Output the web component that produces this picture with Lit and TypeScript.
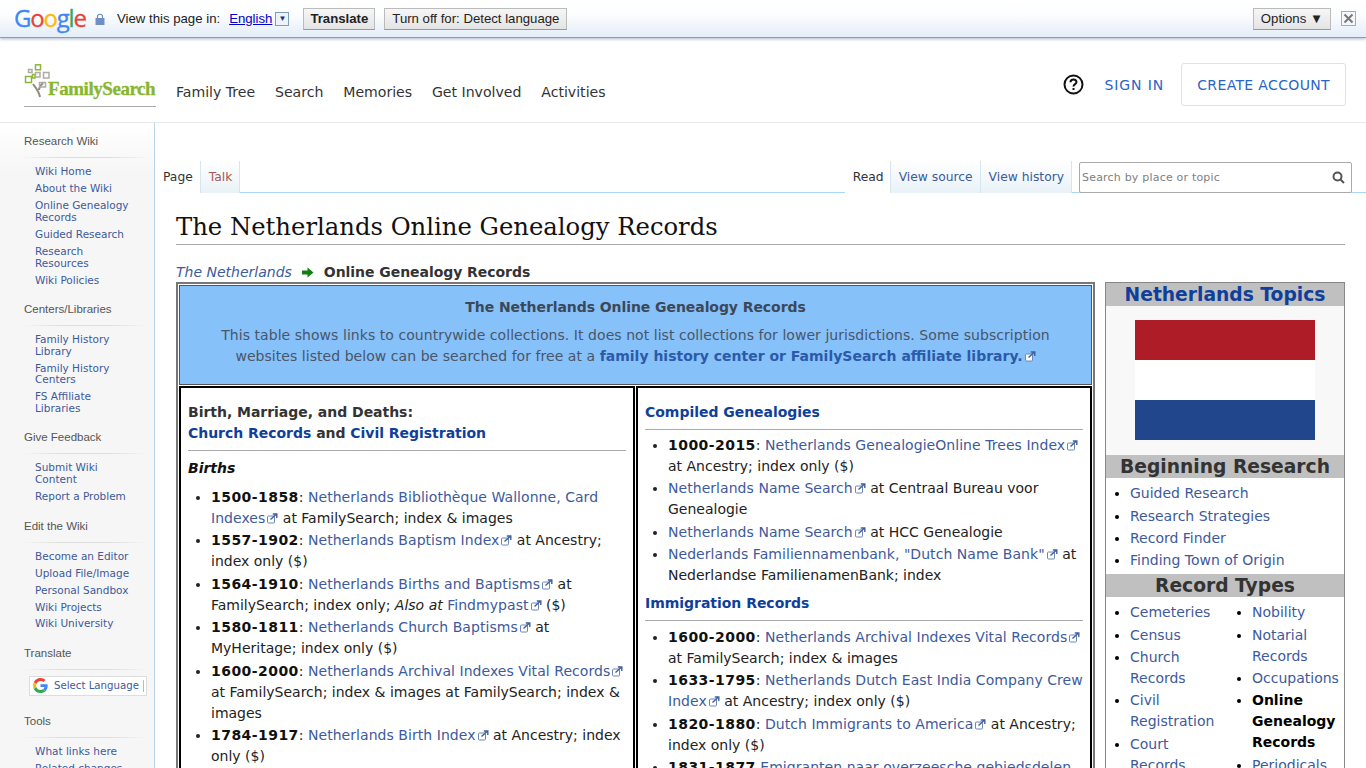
import { LitElement, html, css, svg } from "lit";
import { customElement } from "lit/decorators.js";

const extIcon = html`<svg class="ext" width="11" height="11" viewBox="0 0 11 11">
  <rect x="0.5" y="3" width="7" height="7" rx="1" fill="#fff" stroke="#6d86b8" />
  <path d="M3.5 6.5 L9 1.5 M5.8 1 H9.8 V5" fill="none" stroke="#3f5f9f" stroke-width="1.4" />
</svg>`;

const ext = (t: string) => html`<a href="#">${t}</a>${extIcon}`;

const sidebar = [
  { head: "Research Wiki", links: ["Wiki Home", "About the Wiki", "Online Genealogy Records", "Guided Research", "Research Resources", "Wiki Policies"] },
  { head: "Centers/Libraries", links: ["Family History Library", "Family History Centers", "FS Affiliate Libraries"] },
  { head: "Give Feedback", links: ["Submit Wiki Content", "Report a Problem"] },
  { head: "Edit the Wiki", links: ["Become an Editor", "Upload File/Image", "Personal Sandbox", "Wiki Projects", "Wiki University"] },
];

const typesLeft = ["Cemeteries", "Census", "Church Records", "Civil Registration", "Court Records"];

@customElement("app-root")
export class AppRoot extends LitElement {
  static styles = css`
    :host {
      display: block;
      height: 768px;
      overflow: hidden;
      background: #fff;
      font-family: "DejaVu Sans", Verdana, sans-serif;
      color: #333;
    }
    a {
      color: #3d5a9c;
      text-decoration: none;
    }

    /* google translate bar */
    .gbar {
      height: 38px;
      box-sizing: border-box;
      display: flex;
      align-items: center;
      padding: 0 10px 0 14px;
      background: linear-gradient(#fff, #fcfdfe 40%, #e3edf9);
      border-bottom: 1px solid #7d9fd6;
      box-shadow: 0 1px 3px rgba(90, 110, 150, 0.5);
      font: 13.2px "Liberation Sans", Arial, sans-serif;
      color: #222;
      position: relative;
    }
    .glogo {
      font: 24px "Open Sans", "Liberation Sans", sans-serif;
      letter-spacing: -1.2px;
      -webkit-text-stroke: 0.3px;
      width: 81px;
      margin-top: -2px;
    }
    .lock {
      margin-right: 12px;
    }
    .gbar .lang {
      color: #0000cc;
      text-decoration: underline;
      margin-left: 9px;
    }
    .drop {
      width: 12px;
      height: 12px;
      margin: 0 14px 0 3px;
      border: 1px solid #7f9db9;
      font-size: 8px;
      line-height: 12px;
      text-align: center;
      color: #123a7a;
      background: #eef3fb;
    }
    .gbtn {
      height: 22px;
      box-sizing: border-box;
      padding: 0 7px;
      margin-right: 9px;
      display: flex;
      align-items: center;
      border: 1px solid #bbb;
      border-bottom-color: #999;
      background: linear-gradient(#f6f6f6, #e4e4e4);
    }
    .gbtn.b {
      font-weight: bold;
      padding: 0 6px;
    }
    .grow {
      flex: 1;
    }
    .close {
      width: 13px;
      height: 13px;
      border: 1px solid #aaa;
      margin: 0 0 0 10px;
      display: block;
      background: #f4f7fb;
    }

    /* site header */
    .top {
      height: 84px;
      box-sizing: border-box;
      margin-top: 1px;
      padding: 24px 20px 0 24px;
      display: flex;
      border-bottom: 1px solid #e8e8e8;
    }
    .logo {
      width: 132px;
      height: 43px;
      border-bottom: 1px solid #aaa;
      position: relative;
      flex: none;
    }
    .logo svg {
      position: absolute;
      left: 0;
      top: 1px;
    }
    .logo span {
      position: absolute;
      left: 24px;
      top: 15px;
      font: bold 19px "Liberation Serif", serif;
      letter-spacing: -0.45px;
      -webkit-text-stroke: 0.3px;
      color: #88b62e;
    }
    .nav {
      display: flex;
      gap: 19.8px;
      margin: 21px 0 0 20px;
      font-size: 14.1px;
      line-height: 17px;
      color: #333;
    }
    .account {
      margin-left: auto;
      display: flex;
      align-items: center;
      height: 43px;
      font-size: 14px;
      color: #2a65c4;
      letter-spacing: 0.35px;
    }
    .account svg {
      margin-right: 21px;
    }
    .signin {
      letter-spacing: 0.9px;
    }
    .create {
      margin-left: 17px;
      height: 43px;
      box-sizing: border-box;
      padding: 0 15px;
      display: flex;
      align-items: center;
      border: 1px solid #e2e2e2;
      border-radius: 3px;
    }

    /* body layout */
    .main {
      display: flex;
    }
    .side {
      width: 155px;
      box-sizing: border-box;
      flex: none;
      height: 646px;
      padding: 11px 0 0 24px;
      border-right: 1px solid #b9d4e8;
      background: linear-gradient(#fff, #f6f6f6 50px);
    }
    .side h5 {
      margin: 0;
      font: 11.5px/14px "Liberation Sans", Arial, sans-serif;
      color: #555;
    }
    .side ul {
      list-style: none;
      margin: 9px 8px 0 0;
      padding: 8px 11px 0 11px;
      border-top: 1px solid;
      border-image: linear-gradient(90deg, #f6f6f6, #ddd 30%, #ddd 70%, #f6f6f6) 1;
    }
    .side section {
      margin-bottom: 15.5px;
    }
    .side section.tr {
      margin-bottom: 18px;
    }
    .side li {
      font-size: 10.5px;
      line-height: 11.8px;
      margin-bottom: 5.2px;
    }
    .gt {
      margin: 6px 7px 0 5px;
      height: 20px;
      width: 118px;
      box-sizing: border-box;
      border: 1px solid #ddd;
      background: #fff;
      display: flex;
      align-items: center;
      gap: 6px;
      padding-left: 3px;
      font-size: 10.2px;
      color: #3d5a9c;
      white-space: nowrap;
    }
    .gt i {
      width: 1px;
      height: 12px;
      background: #bbb;
      margin-left: -2px;
    }

    .page {
      flex: 1;
      min-width: 0;
      padding-top: 38px;
    }
    .tabs {
      height: 32px;
      box-sizing: border-box;
      display: flex;
      font-size: 12.3px;
      border-bottom: 1px solid #a7d7f9;
      padding-right: 14px;
    }
    .tab {
      box-sizing: border-box;
      height: 32px;
      padding: 9px 7px 0 8px;
      line-height: 14px;
      color: #3d5a9c;
      background: linear-gradient(#fff, #e8f2f8);
      border-right: 1px solid #d5e6f2;
    }
    .tab.on {
      background: #fff;
      color: #333;
    }
    .tab.read {
      padding-right: 6px;
    }
    .tab.red {
      color: #a55858;
    }
    .search {
      box-sizing: border-box;
      width: 273px;
      height: 31px;
      margin: 1px 0 0 7px;
      border: 1px solid #aaa;
      border-radius: 2px;
      padding: 0 6px 1px 2px;
      display: flex;
      align-items: center;
      justify-content: space-between;
      font-size: 11px;
      letter-spacing: 0.2px;
      color: #808080;
      background: #fff;
    }
    .content {
      padding: 0 21px;
    }
    h1 {
      margin: 0;
      padding-top: 17px;
      height: 52px;
      box-sizing: border-box;
      font: 24.3px/34px "DejaVu Serif", "Liberation Serif", serif;
      color: #111;
      border-bottom: 1px solid #aaa;
    }
    .crumb {
      height: 37px;
      box-sizing: border-box;
      padding-top: 17px;
      font-size: 14px;
      line-height: 20px;
      display: flex;
      align-items: center;
    }
    .crumb em {
      color: #3d5a9c;
    }
    .crumb svg {
      margin: 0 10px 0 9px;
    }
    .crumb b {
      letter-spacing: -0.05px;
    }
    .grid {
      display: flex;
      gap: 10px;
      align-items: flex-start;
      font-size: 14px;
      line-height: 21px;
    }
    .tbl {
      width: 919px;
      flex: none;
      box-sizing: border-box;
      border: 2px solid #777;
      padding: 1px;
    }
    .banner {
      box-sizing: border-box;
      height: 100px;
      padding: 11px 40px 0;
      background: #86c1fa;
      border: 1px solid #555;
      text-align: center;
      letter-spacing: 0.05px;
      color: #4a5568;
    }
    .banner h3 {
      margin: 0 0 7px;
      font-size: 14px;
      line-height: 21px;
      letter-spacing: -0.07px;
      color: #3c4858;
    }
    .banner a {
      color: #2c5aa8;
      font-weight: bold;
      letter-spacing: 0;
    }
    .cols {
      display: flex;
      gap: 1px;
      margin-top: 1px;
    }
    .cell {
      flex: 1 1 0;
      min-width: 0;
      box-sizing: border-box;
      border: 2px solid #000;
      padding: 14px 7px 0;
      height: 460px;
    }
    .cell h4 {
      margin: 0;
      font-size: 14px;
      line-height: 21px;
      letter-spacing: -0.03px;
      color: #333;
    }
    .cell h4 a,
    .bar a {
      color: #0f3f9a;
    }
    .rule {
      border-bottom: 1px solid #aaa;
      padding-bottom: 6px;
    }
    .sub {
      font-weight: bold;
      font-style: italic;
      color: #111;
      margin: 7px 0 8px;
    }
    .cell ul {
      margin: 5px 0 0;
      padding-left: 23px;
      color: #222;
    }
    .cell .sub + ul {
      margin-top: 8px;
    }
    .cell .next + ul {
      margin-top: 5.7px;
    }
    .cell li {
      margin-bottom: 1.4px;
    }
    .cell li a {
      letter-spacing: 0.05px;
    }
    .cell li b {
      color: #111;
      letter-spacing: 0.45px;
    }
    .next {
      margin-top: 7px !important;
    }
    .ext {
      margin-left: 2px;
      vertical-align: -1px;
    }

    .info {
      width: 240px;
      flex: none;
      box-sizing: border-box;
      border: 1px solid #888;
    }
    .bar {
      background: #c0c0c0;
      text-align: center;
      font-size: 18.7px;
      font-weight: bold;
      line-height: 23px;
      color: #333;
    }
    .flagbox {
      background: #f8f8f8;
      padding: 14px 0;
      height: 149px;
      box-sizing: border-box;
    }
    .flag {
      width: 180px;
      height: 120px;
      margin: 0 auto;
      background: linear-gradient(#ae1c28 33.33%, #fff 33.33%, #fff 66.66%, #21468b 66.66%);
    }
    .info ul {
      margin: 0;
      padding: 5.3px 0 1.3px 24px;
      color: #000;
    }
    .info li {
      margin-bottom: 1.4px;
    }
    .types {
      display: grid;
      grid-template-columns: 122px 1fr;
    }
    .info .types ul {
      padding-top: 5px;
    }
    .types b {
      color: #000;
    }
  `;

  render() {
    return html`
      ${this.renderGbar()}
      <div class="top">
        <div class="logo">
          <svg width="30" height="36" viewBox="0 0 30 36" fill="none" stroke-width="1.5">
            <path d="M16 33 C15 27 12 24 9 20 M15 26 C15 23 17 21 19 19" stroke="#8f8b80" stroke-width="2" />
            <rect x="1.5" y="12.5" width="6" height="6" stroke="#8db53c" />
            <rect x="11.5" y="0.8" width="5" height="5" stroke="#8db53c" />
            <rect x="8.5" y="10.5" width="2.5" height="3.5" stroke="#8db53c" />
            <rect x="4.5" y="5.5" width="3.5" height="3" stroke="#b0aca2" />
            <rect x="11.5" y="8.5" width="4.5" height="4.5" stroke="#b0aca2" />
            <rect x="19.5" y="8.5" width="5.5" height="5.5" stroke="#b0aca2" />
            <rect x="15.5" y="18.5" width="6" height="4.5" stroke="#b0aca2" />
          </svg>
          <span>FamilySearch</span>
        </div>
        <div class="nav">
          <span>Family Tree</span><span>Search</span><span>Memories</span><span>Get Involved</span><span>Activities</span>
        </div>
        <div class="account">
          <svg width="21" height="21" viewBox="0 0 21 21">
            <circle cx="10.5" cy="10.5" r="9" fill="none" stroke="#111" stroke-width="2" />
            <path d="M7.5 8.2 C7.5 4.6 13.500 4.6 13.500 8 C13.500 10.2 10.500 10 10.500 12.600" fill="none" stroke="#111" stroke-width="2" />
            <rect x="9.5" y="14" width="2" height="2" fill="#111" />
          </svg>
          <span class="signin">SIGN IN</span>
          <span class="create">CREATE ACCOUNT</span>
        </div>
      </div>
      <div class="main">
        ${this.renderSide()}
        <div class="page">
          <div class="tabs">
            <span class="tab on">Page</span>
            <span class="tab red">Talk</span>
            <span class="grow"></span>
            <span class="tab on read">Read</span>
            <span class="tab">View source</span>
            <span class="tab">View history</span>
            <div class="search">
              <span>Search by place or topic</span>
              <svg width="13" height="13" viewBox="0 0 13 13" fill="none" stroke="#555" stroke-width="2">
                <circle cx="5.5" cy="5.5" r="4" />
                <path d="M8.5 8.5 L12 12" />
              </svg>
            </div>
          </div>
          <div class="content">
            <h1>The Netherlands Online Genealogy Records</h1>
            <div class="crumb">
              <em>The Netherlands</em>
              <svg width="13" height="11" viewBox="0 0 13 11"><path d="M1 3.5 H6.5 V0.5 L12.5 5.5 L6.5 10.5 V7.5 H1 Z" fill="#118011" /></svg>
              <b>Online Genealogy Records</b>
            </div>
            <div class="grid">
              ${this.renderTable()} ${this.renderInfo()}
            </div>
          </div>
        </div>
      </div>
    `;
  }

  renderGbar() {
    return html`<div class="gbar">
      <span class="glogo"
        ><span style="color:#4285f4">G</span><span style="color:#ea4335">o</span><span style="color:#fbbc05">o</span
        ><span style="color:#4285f4">g</span><span style="color:#34a853">l</span><span style="color:#ea4335">e</span></span
      >
      <svg class="lock" width="10" height="12" viewBox="0 0 10 12">
        <path d="M2.5 5 V3.5 C2.5 0.5 7.5 0.5 7.5 3.5 V5" fill="none" stroke="#6f8fc4" stroke-width="1.2" />
        <rect x="0.5" y="5" width="9" height="7" fill="#6f8fc4" />
      </svg>
      <span>View this page in:</span>
      <span class="lang">English</span>
      <span class="drop">▼</span>
      <span class="gbtn b">Translate</span>
      <span class="gbtn">Turn off for: Detect language</span>
      <span class="grow"></span>
      <span class="gbtn" style="margin:0">Options ▼</span>
      <svg class="close" viewBox="0 0 13 13"><path d="M2.5 2.5 L10.5 10.5 M10.5 2.5 L2.5 10.5" stroke="#777" stroke-width="2" /></svg>
    </div>`;
  }

  renderSide() {
    return html`<div class="side">
      ${sidebar.map(
        (s) => html`<section>
          <h5>${s.head}</h5>
          <ul>
            ${s.links.map((l) => html`<li><a href="#">${l}</a></li>`)}
          </ul>
        </section>`
      )}
      <section class="tr">
        <h5>Translate</h5>
        <ul style="padding:0">
          <div class="gt">
            <svg width="15" height="15" viewBox="0 0 48 48">
              ${svg`<path fill="#ea4335" d="M24 9.5c3.5 0 6.700 1.200 9.200 3.600l6.900-6.900C35.900 2.400 30.400 0 24 0 14.600 0 6.500 5.400 2.600 13.200l8 6.200C12.500 13.700 17.800 9.500 24 9.500z"/>
              <path fill="#4285f4" d="M47 24.500c0-1.600-.2-3.200-.4-4.700H24v9h12.900c-.6 3-2.200 5.500-4.700 7.200l7.700 6c4.500-4.200 7.100-10.300 7.100-17.500z"/>
              <path fill="#fbbc05" d="M10.600 28.600c-.5-1.400-.8-3-.8-4.600s.3-3.200.8-4.600l-8-6.200C.9 16.500 0 20.100 0 24s.9 7.500 2.600 10.800l8-6.200z"/>
              <path fill="#34a853" d="M24 48c6.500 0 11.900-2.100 15.900-5.800l-7.700-6c-2.200 1.500-4.900 2.300-8.200 2.300-6.200 0-11.500-4.200-13.400-9.900l-8 6.200C6.500 42.600 14.600 48 24 48z"/>`}
            </svg>
            <span>Select Language</span><i></i>
          </div>
        </ul>
      </section>
      <section>
        <h5>Tools</h5>
        <ul>
          <li><a href="#">What links here</a></li>
          <li><a href="#">Related changes</a></li>
        </ul>
      </section>
    </div>`;
  }

  renderTable() {
    return html`<div class="tbl">
      <div class="banner">
        <h3>The Netherlands Online Genealogy Records</h3>
        This table shows links to countrywide collections. It does not list collections for lower jurisdictions. Some subscription
        websites listed below can be searched for free at a <a href="#">family history center or FamilySearch affiliate library.</a>${extIcon}
      </div>
      <div class="cols">
        <div class="cell">
          <h4 class="rule">Birth, Marriage, and Deaths:<br /><a href="#">Church Records</a> and <a href="#">Civil Registration</a></h4>
          <div class="sub">Births</div>
          <ul>
            <li><b>1500-1858</b>: ${ext("Netherlands Bibliothèque Wallonne, Card Indexes")} at FamilySearch; index &amp; images</li>
            <li><b>1557-1902</b>: ${ext("Netherlands Baptism Index")} at Ancestry; index only ($)</li>
            <li><b>1564-1910</b>: ${ext("Netherlands Births and Baptisms")} at FamilySearch; index only; <i>Also at</i> ${ext("Findmypast")} ($)</li>
            <li><b>1580-1811</b>: ${ext("Netherlands Church Baptisms")} at MyHeritage; index only ($)</li>
            <li><b>1600-2000</b>: ${ext("Netherlands Archival Indexes Vital Records")} at FamilySearch; index &amp; images at FamilySearch; index &amp; images</li>
            <li><b>1784-1917</b>: ${ext("Netherlands Birth Index")} at Ancestry; index only ($)</li>
          </ul>
        </div>
        <div class="cell">
          <h4 class="rule"><a href="#">Compiled Genealogies</a></h4>
          <ul>
            <li><b>1000-2015</b>: ${ext("Netherlands GenealogieOnline Trees Index")} at Ancestry; index only ($)</li>
            <li>${ext("Netherlands Name Search")} at Centraal Bureau voor Genealogie</li>
            <li>${ext("Netherlands Name Search")} at HCC Genealogie</li>
            <li>${ext('Nederlands Familiennamenbank, "Dutch Name Bank"')} at Nederlandse FamilienamenBank; index</li>
          </ul>
          <h4 class="rule next"><a href="#">Immigration Records</a></h4>
          <ul>
            <li><b>1600-2000</b>: ${ext("Netherlands Archival Indexes Vital Records")} at FamilySearch; index &amp; images</li>
            <li><b>1633-1795</b>: ${ext("Netherlands Dutch East India Company Crew Index")} at Ancestry; index only ($)</li>
            <li><b>1820-1880</b>: ${ext("Dutch Immigrants to America")} at Ancestry; index only ($)</li>
            <li><b>1831-1877</b> ${ext("Emigranten naar overzeesche gebiedsdelen")}</li>
          </ul>
        </div>
      </div>
    </div>`;
  }

  renderInfo() {
    return html`<div class="info">
      <div class="bar"><a href="#">Netherlands Topics</a></div>
      <div class="flagbox"><div class="flag"></div></div>
      <div class="bar">Beginning Research</div>
      <ul>
        <li><a href="#">Guided Research</a></li>
        <li><a href="#">Research Strategies</a></li>
        <li><a href="#">Record Finder</a></li>
        <li><a href="#">Finding Town of Origin</a></li>
      </ul>
      <div class="bar">Record Types</div>
      <div class="types">
        <ul>
          ${typesLeft.map((t) => html`<li><a href="#">${t}</a></li>`)}
        </ul>
        <ul>
          <li><a href="#">Nobility</a></li>
          <li><a href="#">Notarial Records</a></li>
          <li><a href="#">Occupations</a></li>
          <li><b>Online Genealogy Records</b></li>
          <li><a href="#">Periodicals</a></li>
        </ul>
      </div>
    </div>`;
  }
}
